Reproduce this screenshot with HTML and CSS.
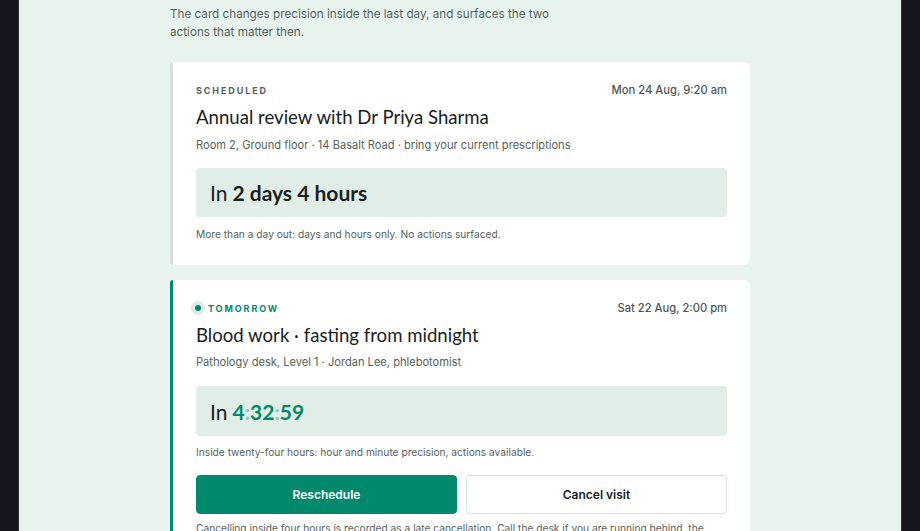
FILE: index.html
```html
<!DOCTYPE html>
<html lang="en">
<head>
<meta charset="utf-8">
<title>Appointment countdown</title>
<link rel="stylesheet" href="styles.css">
</head>
<body>
<div class="frame">
  <main class="panel">
    <div class="column">
      <p class="intro">The card changes precision inside the last day, and surfaces the two actions that matter then.</p>

      <article class="card">
        <div class="card-head">
          <span class="label">SCHEDULED</span>
          <span class="when">Mon 24 Aug, 9:20 am</span>
        </div>
        <h2 class="title">Annual review with Dr Priya Sharma</h2>
        <p class="meta">Room 2, Ground floor · 14 Basalt Road · bring your current prescriptions</p>
        <div class="countdown">In <strong>2 days 4 hours</strong></div>
        <p class="note">More than a day out: days and hours only. No actions surfaced.</p>
      </article>

      <article class="card card-soon">
        <div class="card-head">
          <span class="label label-soon"><span class="dot"></span>TOMORROW</span>
          <span class="when">Sat 22 Aug, 2:00 pm</span>
        </div>
        <h2 class="title">Blood work · fasting from midnight</h2>
        <p class="meta">Pathology desk, Level 1 · Jordan Lee, phlebotomist</p>
        <div class="countdown">In <strong class="clock">4<span class="sep">:</span>32<span class="sep">:</span>59</strong></div>
        <p class="note">Inside twenty-four hours: hour and minute precision, actions available.</p>
        <div class="actions">
          <button class="btn btn-primary">Reschedule</button>
          <button class="btn btn-ghost">Cancel visit</button>
        </div>
        <p class="note note-last">Cancelling inside four hours is recorded as a late cancellation. Call the desk if you are running behind, the team can often hold your slot.</p>
      </article>
    </div>
  </main>
</div>
</body>
</html>
```

FILE: styles.css
```css
* { box-sizing: border-box; }
html, body { margin: 0; padding: 0; }
body {
  background: #14151d;
  font-family: Inter, "Liberation Sans", sans-serif;
  color: #1c2420;
  height: 531px;
  overflow: hidden;
}
.frame {
  padding: 0 18px;
  height: 531px;
}
.panel {
  background: #e8f3ee;
  height: 100%;
  border-left: 1px solid #2a2d33;
  border-right: 1px solid #2a2d33;
}
.column {
  width: 580px;
  margin: 0 auto;
  padding-top: 5px;
}
.intro {
  margin: 0 0 21px;
  font-size: 11.7px;
  line-height: 18px;
  color: #56625c;
  width: 390px;
}
.card {
  background: #fff;
  border-left: 3px solid #d8dfdb;
  border-radius: 3px 6px 6px 3px;
  padding: 20px 23px 23px 23px;
  margin-bottom: 15px;
}
.card-soon { border-left-color: #008a6a; padding-bottom: 10px; }
.card-head {
  display: flex;
  justify-content: space-between;
  align-items: center;
  height: 16px;
}
.label {
  font-size: 9px;
  font-weight: 700;
  letter-spacing: 1.9px;
  color: #56625c;
  display: flex;
  align-items: center;
}
.label-soon { color: #008a6a; margin-left: -5px; }
.dot {
  width: 14px;
  height: 14px;
  border-radius: 50%;
  background: #dcede6;
  margin-right: 3px;
  display: inline-flex;
  align-items: center;
  justify-content: center;
}
.dot::after {
  content: "";
  width: 6px;
  height: 6px;
  border-radius: 50%;
  background: #008a6a;
}
.when {
  font-size: 11.2px;
  color: #4d5752;
  font-weight: 500;
}
.title {
  margin: 6px 0 0;
  font-family: Lato, "Open Sans", sans-serif;
  font-weight: 400;
  font-size: 18.6px;
  line-height: 26px;
  color: #1a211d;
}
.meta {
  margin: 6px 0 0;
  font-size: 11.1px;
  line-height: 18px;
  color: #56625c;
}
.card-soon .meta { margin-top: 5px; }
.countdown {
  margin-top: 14px;
  background: #e0eee7;
  border-radius: 4px;
  height: 49px;
  padding: 0 14px;
  display: flex;
  align-items: center;
  gap: 5px;
  font-family: Lato, "Open Sans", sans-serif;
  font-size: 21px;
  color: #1a211d;
}
.card-soon .countdown { margin-top: 15px; height: 50px; }
.countdown strong { font-weight: 700; }
.clock { color: #008a6a; }
.sep { color: #8ac8b3; }
.note {
  margin: 9px 0 0;
  font-size: 10.2px;
  line-height: 16px;
  color: #56625c;
}
.card-soon .note { margin-top: 8px; }
.actions {
  display: flex;
  gap: 9px;
  margin-top: 15px;
}
.btn {
  flex: 1;
  height: 39px;
  border-radius: 4px;
  font-family: Inter, "Liberation Sans", sans-serif;
  font-size: 12px;
  font-weight: 600;
  cursor: pointer;
}
.btn-primary {
  background: #00896b;
  color: #fff;
  border: 1px solid #00896b;
}
.btn-ghost {
  background: #fff;
  color: #1a211d;
  border: 1px solid #d8e2dd;
}
.card-soon .note-last { margin-top: 6px; }
```
